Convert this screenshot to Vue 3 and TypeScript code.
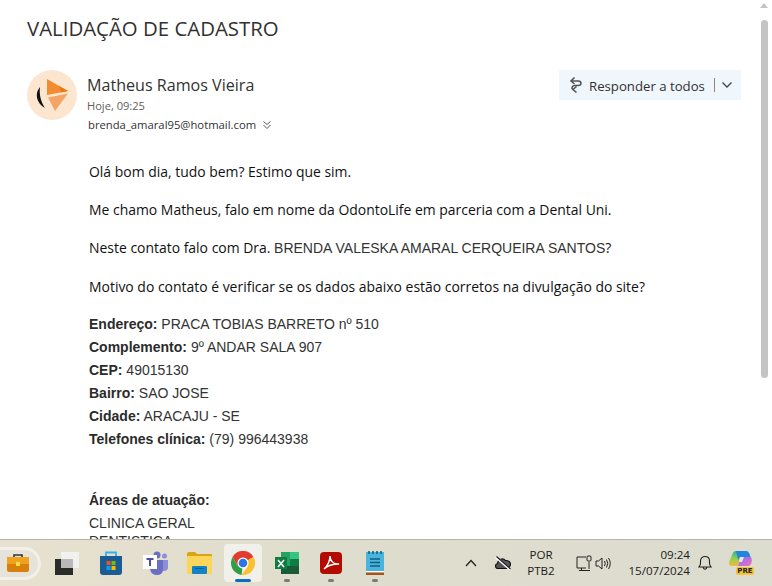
<template>
  <div class="screen">
    <div class="window">
      <main class="mail">
        <h1 class="subject">VALIDAÇÃO DE CADASTRO</h1>

        <header class="mail-head">
          <div class="avatar">
            <svg width="50" height="50" viewBox="0 0 50 50">
              <circle cx="25" cy="25" r="25" fill="#fde6cf" />
              <path d="M13 17 C7.5 23 9 33 18 38 C14 32 12 25 13 17 Z" fill="#111" />
              <path d="M20 9 L41 21 L20 25 Z" fill="#f08c32" />
              <path d="M21 27.5 L41 23.5 L28 41 Z" fill="#f3a565" />
              <path d="M32 16 L41 21 L34 22.5 Z" fill="#e97a12" />
            </svg>
          </div>
          <div class="sender">
            <div class="sender-name">{{ senderName }}</div>
            <div class="sender-time">Hoje, 09:25</div>
            <div class="sender-to">
              <span>brenda_amaral95@hotmail.com</span>
              <svg width="10" height="10" viewBox="0 0 10 10" fill="none" stroke="#555" stroke-width="1">
                <path d="M1.5 1.5 L5 4.5 L8.5 1.5 M1.5 5 L5 8.5 L8.5 5" />
              </svg>
            </div>
          </div>
          <div class="reply-all">
            <svg width="18" height="18" viewBox="0 0 18 18" fill="none" stroke="#505050" stroke-width="1.5">
              <path d="M7.5 1.5 L4 5 L7.5 8" />
              <path d="M4 5 H11 C15 5 15 9.5 11 9.5 H8 C5 9.5 4 12.5 6 13.5" />
              <path d="M9.5 10.5 L6 13.5 L9.5 16.5" />
            </svg>
            <span>Responder a todos</span>
            <i class="reply-sep"></i>
            <svg width="12" height="12" viewBox="0 0 12 12" fill="none" stroke="#444" stroke-width="1.3">
              <path d="M1.5 3.5 L6 8 L10.5 3.5" />
            </svg>
          </div>
        </header>

        <section class="body">
          <p v-for="line in intro" :key="line" class="para" v-html="line"></p>

          <div class="details">
            <div v-for="row in details" :key="row.label" class="detail-row">
              <b>{{ row.label }}:</b> {{ row.value }}
            </div>
          </div>

          <div class="areas">
            <div class="detail-row"><b>Áreas de atuação:</b></div>
            <div class="area-list">
              <div v-for="a in areas" :key="a" class="detail-row area-item">{{ a }}</div>
            </div>
          </div>
        </section>
      </main>

      <div class="scrollbar">
        <svg width="8" height="5" viewBox="0 0 8 5"><path d="M0 5 L4 0 L8 5 Z" fill="#c4c4c4" /></svg>
        <div class="thumb"></div>
      </div>
    </div>

    <footer class="taskbar">
      <div class="widget">
        <svg width="24" height="22" viewBox="0 0 24 22">
          <path d="M8 6 V3 H16 V6" fill="none" stroke="#333" stroke-width="1.6" />
          <rect x="1" y="5" width="22" height="15" rx="2" fill="#d97f0c" />
          <rect x="1" y="5" width="22" height="7" fill="#f0a21f" />
          <rect x="10" y="10" width="4" height="4" fill="#fde14a" />
        </svg>
      </div>

      <div class="apps">
        <div class="app">
          <svg width="25" height="23" viewBox="0 0 25 23">
            <rect x="6" y="0" width="18" height="16" fill="#f1f1f0" />
            <rect x="0" y="7" width="18" height="16" fill="#2b2b2b" />
            <rect x="6" y="7" width="12" height="9" fill="#b9b9b9" />
          </svg>
        </div>
        <div class="app">
          <svg width="24" height="24" viewBox="0 0 24 24">
            <path d="M7 6 V1.5 H17 V6" fill="none" stroke="#2fb4e8" stroke-width="1.8" />
            <path d="M1 5 H23 V21 Q23 24 20 24 H4 Q1 24 1 21 Z" fill="#1b5c95" />
            <rect x="7.5" y="10" width="4" height="4" fill="#f25022" />
            <rect x="12.5" y="10" width="4" height="4" fill="#7fba00" />
            <rect x="7.5" y="15" width="4" height="4" fill="#00a4ef" />
            <rect x="12.5" y="15" width="4" height="4" fill="#ffb900" />
          </svg>
        </div>
        <div class="app">
          <svg width="25" height="24" viewBox="0 0 25 24">
            <circle cx="14" cy="4" r="3.5" fill="#6b6fc4" />
            <circle cx="21.5" cy="5" r="2.5" fill="#8b8fd8" />
            <path d="M18 9 H25 V16 Q25 20 21 20 H18 Z" fill="#8b8fd8" />
            <path d="M7 9 H20 V18 Q20 24 14 24 Q8 24 7 18 Z" fill="#6b6fc4" />
            <rect x="0" y="4" width="14" height="14" fill="#fff" />
            <path d="M3.5 8 H10.5 M7 8 V15" stroke="#4b4fa8" stroke-width="2" />
          </svg>
        </div>
        <div class="app">
          <svg width="25" height="22" viewBox="0 0 25 22">
            <path d="M0 2 Q0 0 2 0 H8 L10 2 H24 Q25 2 25 3 V6 H0 Z" fill="#d9a514" />
            <rect x="0" y="4" width="25" height="18" rx="1" fill="#fbd65a" />
            <rect x="5" y="14" width="15" height="8" rx="1" fill="#1283c9" />
            <rect x="8" y="16" width="9" height="1" fill="#0a5f96" />
          </svg>
        </div>
        <div class="app app-active">
          <svg width="24" height="24" viewBox="0 0 26 26">
            <path d="M13 13 L24.3 6.5 A13 13 0 0 0 1.7 6.5 L7.3 16.2 Z" fill="#e33b2e" />
            <path d="M13 13 L7.3 16.2 L1.7 6.5 A13 13 0 0 0 11.5 25.9 Z" fill="#2f9e44" />
            <path d="M13 13 L24.3 6.5 A13 13 0 0 1 11.5 25.9 L18.7 16 Z" fill="#fbc02d" />
            <circle cx="13" cy="13" r="6" fill="#fff" />
            <circle cx="13" cy="13" r="4.7" fill="#2a76e4" />
          </svg>
          <i class="run-mark run-blue"></i>
        </div>
        <div class="app">
          <svg width="24" height="22" viewBox="0 0 24 22">
            <rect x="6" y="0" width="18" height="22" fill="#21a366" />
            <rect x="15" y="0" width="9" height="7" fill="#33c481" />
            <rect x="6" y="14" width="18" height="8" fill="#185c37" />
            <rect x="15" y="7" width="9" height="7" fill="#107c41" />
            <rect x="0" y="5" width="12" height="12" fill="#107c41" />
            <path d="M3 8 L9 15 M9 8 L3 15" stroke="#fff" stroke-width="1.5" />
          </svg>
          <i class="run-mark"></i>
        </div>
        <div class="app">
          <svg width="22" height="22" viewBox="0 0 22 22">
            <rect width="22" height="22" rx="4" fill="#b30b00" />
            <path d="M4 17 C8 14 10 8 10 4 C10 9 14 13 19 12 C14 12 8 13 4 17 Z" fill="none" stroke="#fff" stroke-width="1.4" />
          </svg>
          <i class="run-mark"></i>
        </div>
        <div class="app">
          <svg width="19" height="24" viewBox="0 0 19 24">
            <rect x="0" y="1" width="18" height="19" fill="#47b5dc" />
            <rect x="0" y="20" width="18" height="1.5" fill="#fff" />
            <rect x="0" y="21.5" width="18" height="2.5" fill="#a5521c" />
            <path d="M3 0 V3 M7 0 V3 M11 0 V3 M15 0 V3" stroke="#155d80" stroke-width="1.5" />
            <path d="M4 8 H14 M4 11.5 H14 M4 15 H14" stroke="#155d80" stroke-width="1.6" />
          </svg>
          <i class="run-mark"></i>
        </div>
      </div>

      <div class="tray">
        <svg class="tray-chevron" width="12" height="8" viewBox="0 0 12 8" fill="none" stroke="#222" stroke-width="1.3">
          <path d="M1 7 L6 1.5 L11 7" />
        </svg>
        <svg class="tray-cloud" width="18" height="14" viewBox="0 0 18 14" fill="#555" stroke="#111" stroke-width="1.1">
          <path d="M4 12.5 C1 12.5 0.5 8 3.5 7.5 C4 3 9 1.5 11.5 4.5 C15 4 17.5 7 16 10 C15.5 11.5 14.5 12.5 13 12.5 Z" />
          <path d="M2 1 L16 13.5" stroke="#fff" stroke-width="2.4" />
          <path d="M2.5 0.5 L16.5 13" />
        </svg>
        <div class="lang"><span>POR</span><span>PTB2</span></div>
        <svg class="tray-net" width="17" height="17" viewBox="0 0 17 17" fill="none" stroke="#222" stroke-width="1">
          <path d="M10 2 H1 V13 H10 M5.5 13 V15.5 M3 15.5 H14 M13 7 V14" />
          <rect x="11" y="1" width="4" height="5" rx="1" />
        </svg>
        <svg class="tray-vol" width="17" height="15" viewBox="0 0 17 15" fill="none" stroke="#222" stroke-width="1">
          <path d="M1 5 H3.5 L7 2 V13 L3.5 10 H1 Z" />
          <path d="M9.5 5 Q11 7.5 9.5 10 M11.5 3.5 Q14 7.5 11.5 11.5 M13.5 2 Q17 7.5 13.5 13" />
        </svg>
        <div class="clock"><span>09:24</span><span>15/07/2024</span></div>
        <svg class="tray-bell" width="14" height="16" viewBox="0 0 14 16" fill="none" stroke="#222" stroke-width="1.1">
          <path d="M1 12 Q2.5 10.5 2.5 8 V6 C2.5 0 11.5 0 11.5 6 V8 Q11.5 10.5 13 12 Z M5 12.5 Q7 16 9 12.5" />
        </svg>
        <div class="copilot">
          <svg width="24" height="17" viewBox="0 0 24 17">
            <defs>
              <linearGradient id="cpLeft" x1="0" y1="0" x2="0" y2="1">
                <stop offset="0" stop-color="#2fb0a0" />
                <stop offset="0.5" stop-color="#8fd14f" />
                <stop offset="1" stop-color="#f5b73c" />
              </linearGradient>
              <linearGradient id="cpRight" x1="0" y1="0" x2="1" y2="1">
                <stop offset="0" stop-color="#8a6ff0" />
                <stop offset="1" stop-color="#ee6fc0" />
              </linearGradient>
            </defs>
            <path d="M7 0 H13 L9 15 H3 Q-1 15 0.5 10 L3.5 3 Q4.5 0 7 0 Z" fill="url(#cpLeft)" />
            <path d="M7 0 H17 Q19.5 0 20.5 3 L21.5 6 H12 Q10 6 9 9 Z" fill="#1f86dc" />
            <path d="M12 6 H22 Q24.5 12 20 15 H9 Z" fill="url(#cpRight)" />
            <path d="M11 6 H15 L13 11 H10 Z" fill="#e9e4f5" />
          </svg>
          <span class="pre">PRE</span>
        </div>
      </div>
    </footer>
  </div>
</template>

<script setup lang="ts">
interface DetailRow {
  label: string
  value: string
}

const senderName = 'Matheus Ramos Vieira'

const intro: string[] = [
  'Olá bom dia, tudo bem? Estimo que sim.',
  'Me chamo Matheus, falo em nome da OdontoLife em parceria com a Dental Uni.',
  'Neste contato falo com Dra. <span class="arial-name">BRENDA VALESKA AMARAL CERQUEIRA SANTOS</span>?',
  'Motivo do contato é verificar se os dados abaixo estão corretos na divulgação do site?'
]

const details: DetailRow[] = [
  { label: 'Endereço', value: 'PRACA TOBIAS BARRETO nº 510' },
  { label: 'Complemento', value: '9º ANDAR SALA 907' },
  { label: 'CEP', value: '49015130' },
  { label: 'Bairro', value: 'SAO JOSE' },
  { label: 'Cidade', value: 'ARACAJU - SE' },
  { label: 'Telefones clínica', value: '(79) 996443938' }
]

const areas: string[] = ['CLINICA GERAL', 'DENTISTICA']
</script>

<style>
html,
body {
  margin: 0;
  overflow: hidden;
}

.arial-name {
  font-family: "Liberation Sans", Arial, sans-serif;
  font-size: 14px;
  color: #333;
}
</style>

<style scoped>
.screen {
  width: 772px;
  height: 586px;
  display: flex;
  flex-direction: column;
  overflow: hidden;
  background: #fff;
  font-family: "Open Sans", "Noto Sans", sans-serif;
}

.window {
  flex: 1;
  min-height: 0;
  display: flex;
}

.mail {
  flex: 1;
  min-width: 0;
  overflow: hidden;
  padding: 0 15px 0 27px;
}

.subject {
  margin: 14px 0 0;
  font-size: 20.4px;
  line-height: 28px;
  font-weight: 400;
  color: #323130;
  white-space: nowrap;
}

.mail-head {
  display: flex;
  align-items: flex-start;
  margin-top: 28px;
}

.avatar {
  width: 50px;
  height: 50px;
  flex: none;
}

.sender {
  margin-left: 10px;
  flex: 1;
  min-width: 0;
}

.sender-name {
  font-size: 16.1px;
  line-height: 22px;
  margin-top: 4px;
  color: #323130;
}

.sender-time {
  font-size: 11.1px;
  line-height: 14px;
  margin-top: 3px;
  color: #605e5c;
}

.sender-to {
  display: flex;
  align-items: center;
  gap: 6px;
  margin-top: 4px;
  padding-left: 1px;
  font-size: 11.27px;
  line-height: 16px;
  color: #323130;
}

.reply-all {
  display: flex;
  align-items: center;
  width: 182px;
  height: 30px;
  box-sizing: border-box;
  padding-left: 8px;
  background: #eff6fc;
  font-size: 13.2px;
  color: #323130;
  flex: none;
}

.reply-all span {
  margin-left: 4px;
  padding-top: 1px;
}

.reply-sep {
  width: 1px;
  height: 14px;
  margin: 0 6px 0 9px;
  background: #8a8886;
}

.body {
  margin: 0 0 0 62px;
  padding-top: 29px;
}

.para {
  margin: 0 0 19px;
  font-size: 13.95px;
  line-height: 19px;
  color: #111;
  white-space: nowrap;
}

.details {
  margin-top: -2px;
  font-family: "Liberation Sans", Arial, sans-serif;
}

.detail-row {
  font-family: "Liberation Sans", Arial, sans-serif;
  font-size: 14px;
  line-height: 23px;
  color: #333;
  white-space: nowrap;
}

.detail-row b {
  color: #2b2b2b;
}

.areas {
  margin-top: 38px;
}

.area-list {
  margin-top: 2px;
}

.area-item {
  line-height: 18px;
}

.scrollbar {
  width: 16px;
  flex: none;
  display: flex;
  flex-direction: column;
  align-items: center;
  padding-top: 3px;
}

.thumb {
  width: 7px;
  height: 358px;
  margin-top: 12px;
  border-radius: 4px;
  background: #c4c4c4;
}

.taskbar {
  height: 47px;
  flex: none;
  box-sizing: border-box;
  display: flex;
  align-items: center;
  border-top: 1px solid #b5b5ae;
  background: linear-gradient(90deg, #e8e1cf 0%, #dfddcd 40%, #dcdccf 100%);
}

.widget {
  width: 50px;
  height: 33px;
  margin-left: -9px;
  padding-left: 15px;
  box-sizing: border-box;
  flex: none;
  display: flex;
  align-items: center;
  border: 3px solid #f2f0e8;
  border-left: none;
  border-radius: 0 17px 17px 0;
  background: #e6e4da;
}

.apps {
  display: flex;
  margin-left: 7px;
}

.app {
  position: relative;
  width: 38px;
  height: 38px;
  margin-right: 6px;
  display: flex;
  align-items: center;
  justify-content: center;
  border-radius: 4px;
}

.app-active {
  background: #f1f0ea;
}

.run-mark {
  position: absolute;
  bottom: 0;
  left: 16px;
  width: 6px;
  height: 3px;
  border-radius: 2px;
  background: #7b7b78;
}

.run-blue {
  left: 11px;
  width: 16px;
  background: #0f6cbd;
}

.tray {
  margin-left: auto;
  display: flex;
  align-items: center;
  font-family: "Open Sans", "Noto Sans", sans-serif;
  font-size: 11.6px;
  color: #1b1b1b;
}

.tray-chevron {
  margin-right: 17px;
}

.tray-cloud {
  margin-right: 14px;
}

.lang {
  display: flex;
  flex-direction: column;
  align-items: center;
  width: 30px;
  line-height: 16px;
  margin-right: 20px;
}

.tray-net {
  margin-right: 2px;
}

.clock {
  display: flex;
  flex-direction: column;
  align-items: flex-end;
  width: 64px;
  line-height: 16px;
  margin: 0 0 0 14px;
}

.tray-bell {
  margin-left: 8px;
}

.copilot {
  position: relative;
  width: 24px;
  height: 24px;
  margin: 0 19px 0 17px;
}

.pre {
  position: absolute;
  right: -1px;
  bottom: 0;
  width: 18px;
  text-align: center;
  border-radius: 2px;
  background: #f6c433;
  font-family: "DejaVu Sans", sans-serif;
  font-size: 7px;
  font-weight: 700;
  line-height: 8px;
  color: #222;
}
</style>
